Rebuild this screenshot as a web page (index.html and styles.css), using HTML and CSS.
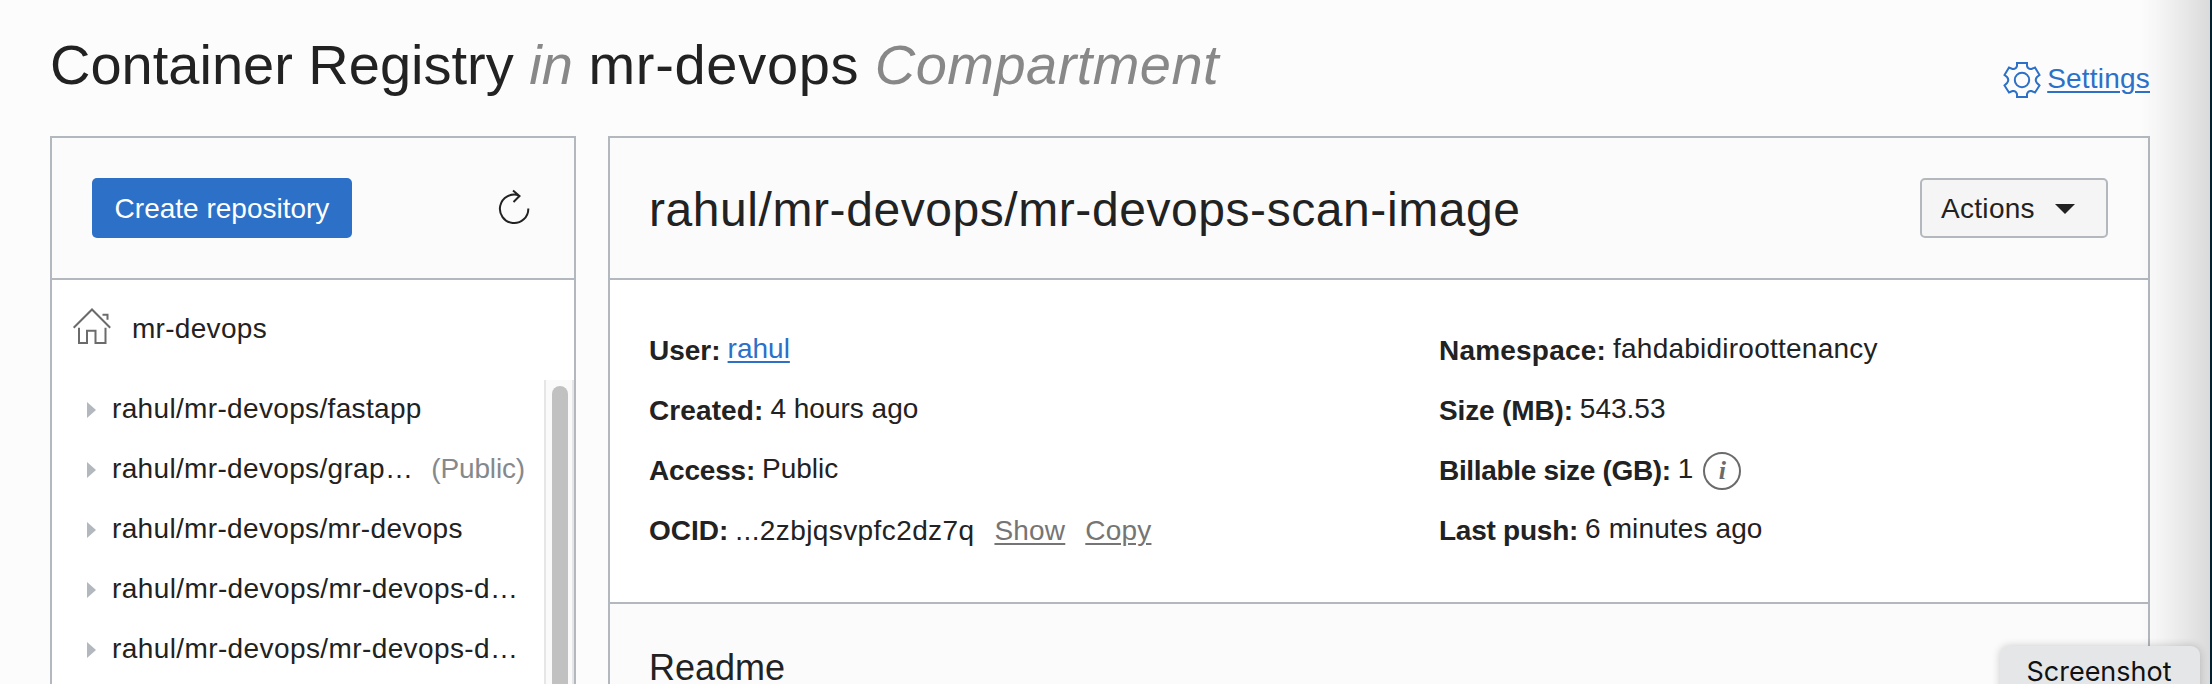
FILE: index.html
```html
<!DOCTYPE html>
<html lang="en">
<head>
<meta charset="utf-8">
<title>Container Registry</title>
<link rel="stylesheet" href="styles.css">
</head>
<body>
<div class="screen">
  <header class="page-header">
    <h1 class="page-title">Container Registry <em>in</em> <span class="name">mr-devops</span> <em class="kind">Compartment</em></h1>
    <a class="settings">
      <svg class="gear" width="38" height="38" viewBox="0 0 38 38"><path d="M14 2H24V5Q25 8.500 28.500 8L32 6.500L36.500 14L34 16Q31.500 19 34 22L36.500 24.500L32 31.500L28.500 30Q25 29.500 24 33V36H14V33Q13 29.500 9.500 30L6 31.500L1.500 24.500L4 22Q6.500 19 4 16L1.500 14L6 6.500L9.500 8Q13 8.500 14 5Z"/><circle cx="19" cy="19" r="7.200"/></svg>
      <span class="link settings-text">Settings</span>
    </a>
  </header>
  <main class="panels">
    <aside class="panel">
      <div class="panel-head side-head">
        <button class="btn primary">Create repository</button>
        <svg class="refresh" width="36" height="40" viewBox="0 0 36 40"><path d="M32.300 20.500A14.200 14.200 0 1 1 23 7.500M17 2.500L23.500 8L17.500 14"/></svg>
      </div>
      <div class="home">
        <svg class="house" width="42" height="40" viewBox="0 0 42 40"><path d="M2.700 22.700L21 4.500L39.200 22.700M31.500 9.700H36.500V14.700M8 22.700V38H16V25.700H24.500V38H34.500V22.700"/></svg>
        <span class="home-name">mr-devops</span>
      </div>
      <div class="tree">
        <ul class="repos">
          <li><i class="arrow"></i><span>rahul/mr-devops/fastapp</span></li>
          <li><i class="arrow"></i><span>rahul/mr-devops/grap…</span><span class="muted">(Public)</span></li>
          <li><i class="arrow"></i><span>rahul/mr-devops/mr-devops</span></li>
          <li><i class="arrow"></i><span class="cut">rahul/mr-devops/mr-devops-d…</span></li>
          <li><i class="arrow"></i><span class="cut">rahul/mr-devops/mr-devops-d…</span></li>
        </ul>
        <div class="scrollbar"><div class="thumb"></div></div>
      </div>
    </aside>
    <section class="panel">
      <div class="panel-head main-head">
        <h2 class="image-title">rahul/mr-devops/mr-devops-scan-image</h2>
        <button class="btn actions"><span>Actions</span><i class="caret"></i></button>
      </div>
      <div class="details">
        <div class="col">
          <p><b>User:</b><span class="val link">rahul</span></p>
          <p><b class="created">Created:</b><span class="val">4 hours ago</span></p>
          <p><b class="access">Access:</b><span class="val">Public</span></p>
          <p><b>OCID:</b><span class="val ocid">...2zbjqsvpfc2dz7q</span><span class="act">Show</span><span class="act">Copy</span></p>
        </div>
        <div class="col">
          <p><b class="namespace">Namespace:</b><span class="val tenancy">fahdabidiroottenancy</span></p>
          <p><b class="size">Size (MB):</b><span class="val">543.53</span></p>
          <p><b class="billable">Billable size (GB):</b><span class="val">1</span><span class="info">i</span></p>
          <p><b class="push">Last push:</b><span class="val push-time">6 minutes ago</span></p>
        </div>
      </div>
      <div class="readme"><h3>Readme</h3></div>
    </section>
  </main>
  <div class="edge-shadow"></div>
  <div class="tooltip">Screenshot</div>
</div>
</body>
</html>
```
FILE: styles.css
```css
* { box-sizing: border-box; }
body { margin: 0; background: #fcfcfc; color: #222; font: 28px "Liberation Sans", Arial, sans-serif; }
h1, h2, h3, p, ul { margin: 0; padding: 0; font-weight: 400; }
.screen { position: relative; width: 2212px; height: 684px; overflow: hidden; }

.page-header { height: 136px; padding: 33px 62px 0 50px; display: flex; justify-content: space-between; }
.page-title { font-size: 56px; line-height: 64px; white-space: nowrap; }
.page-title em { color: #888; }
.name { letter-spacing: 0.7px; }
.kind { letter-spacing: 0.45px; }
.settings { display: flex; gap: 6px; height: 38px; margin-top: 28px; color: #2c70c8; line-height: 36px; }
.settings-text { letter-spacing: 0.2px; }
.gear, .refresh, .house { fill: none; stroke: currentColor; stroke-width: 2; flex: none; }
.link { color: #2c70c8; text-decoration: underline; text-decoration-thickness: 2px; text-underline-offset: 3px; }

.panels { display: grid; grid-template-columns: 526px 1542px; gap: 32px; padding-left: 50px; }
.panel { border: 2px solid #b3b8be; height: 560px; background: #fff; }
.panel-head { height: 142px; border-bottom: 2px solid #b3b8be; background: #fbfbfb; display: flex; align-items: center; justify-content: space-between; }
.side-head { padding: 0 42px 0 40px; }
.main-head { padding: 0 40px 0 39px; }
.btn { font: inherit; height: 60px; border-radius: 5px; padding: 0; white-space: nowrap; }
.primary { width: 260px; border: 0; background: #2c70c8; color: #fff; padding-top: 1px; }
.actions { width: 188px; border: 2px solid #b3b8be; background: #f5f5f5; color: #222; display: flex; align-items: center; padding: 1px 0 0 19px; gap: 20px; letter-spacing: 0.3px; }
.caret { border: 10px solid transparent; border-top-color: #222; border-bottom: 0; }
.image-title { font-size: 48px; line-height: 56px; padding-top: 3px; letter-spacing: 0.57px; }

.home { height: 100px; padding-left: 19px; display: flex; line-height: 98px; gap: 19px; }
.home-name { letter-spacing: 0.3px; }
.house { margin-top: 25px; color: #6b6b6b; }
.tree { display: flex; justify-content: space-between; }
.repos { list-style: none; letter-spacing: 0.34px; }
.repos li { display: flex; align-items: center; height: 56px; line-height: 56px; margin-bottom: 4px; padding-left: 35px; white-space: nowrap; }
.repos span { padding-top: 2px; }
.cut { letter-spacing: 0.4px; }
.arrow { border: 8px solid transparent; border-left: 9px solid #b3b8be; border-right: 0; margin: 3px 16px 0 0; }
.muted { color: #86898c; margin-left: 18px; letter-spacing: -0.15px; }
.scrollbar { width: 30px; height: 310px; border: solid #e6e6e6; border-width: 0 2px; background: #fafafa; padding: 6px 6px 0; }
.thumb { height: 310px; width: 16px; border-radius: 8px; background: #c1c1c1; }

.details { height: 324px; padding: 41px 0 0 39px; border-bottom: 2px solid #b3b8be; display: grid; grid-template-columns: 790px 1fr; }
.details p { height: 60px; line-height: 60px; white-space: nowrap; }
.val { line-height: 1; vertical-align: 2px; margin-left: 7px; }
.created { letter-spacing: 0.1px; }
.access { letter-spacing: -0.2px; }
.ocid { vertical-align: 0; letter-spacing: 0.4px; }
.namespace { letter-spacing: 0.2px; }
.tenancy { letter-spacing: 0.24px; }
.size { letter-spacing: -0.15px; }
.billable { letter-spacing: -0.33px; }
.push { letter-spacing: -0.25px; }
.push-time { letter-spacing: 0.12px; }
.act { color: #757575; text-decoration: underline; text-decoration-thickness: 2px; text-underline-offset: 3px; margin-left: 20px; letter-spacing: 0.2px; }
.info { display: inline-block; width: 38px; height: 38px; border: 2px solid #6b6b6b; border-radius: 50%; color: #6b6b6b; font: italic bold 26px/34px "Liberation Serif", serif; text-align: center; margin-left: 10px; vertical-align: 1px; }

.readme { height: 90px; background: #fbfbfb; padding: 44px 0 0 39px; }
h3 { font-size: 36px; line-height: 40px; }
.edge-shadow { position: absolute; top: 0; right: 0; width: 72px; height: 684px; border-right: 2px solid #04202c; background: linear-gradient(90deg, #0000, #00000008 30%, #00000022); }
.tooltip { position: absolute; left: 2000px; top: 646px; width: 200px; height: 50px; border-radius: 9px 9px 0 0; background: #e5e6e8; box-shadow: 0 0 8px #0003; color: #111; font: 27px/52px Inter, sans-serif; text-align: center; padding-right: 2px; }
```
